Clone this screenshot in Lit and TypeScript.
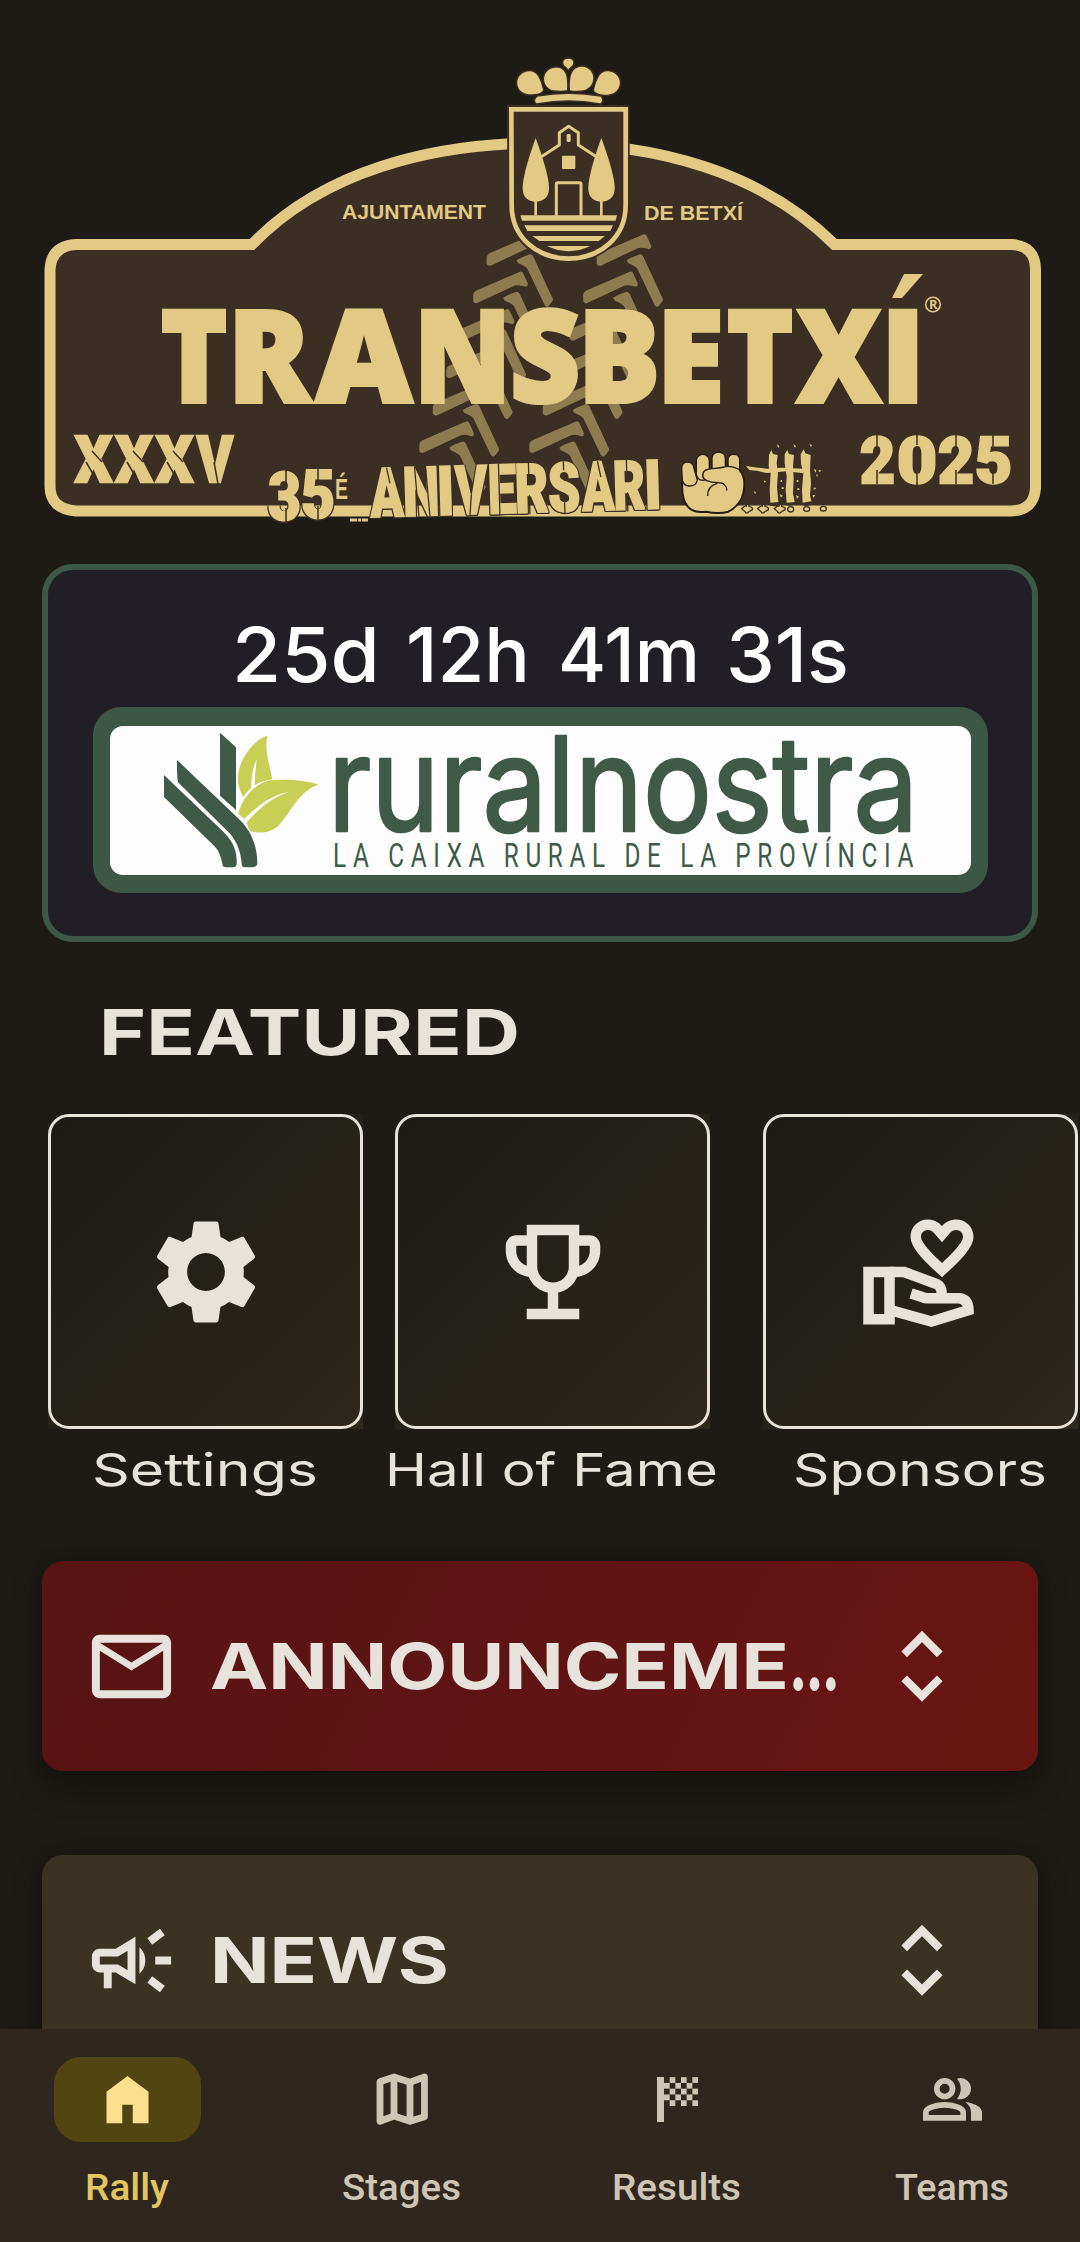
import { LitElement, html, svg, css } from "lit";
import { customElement, property } from "lit/decorators.js";

const GOLD = "#e2ca84";
const BROWN = "#3d2e23";

type Glyph = [string, number, number];

/** SVG text run stretched between two x positions, sitting on a baseline. */
const run = (t: string, x0: number, x1: number, y: number, size: number, cls: string) =>
  svg`<text class=${cls} x=${x0} y=${y} font-size=${size} textLength=${x1 - x0} lengthAdjust="spacingAndGlyphs">${t}</text>`;

@customElement("fit-text")
class FitText extends LitElement {
  @property() text = "";
  @property() tail = "";
  @property({ type: Number }) width = 100;
  @property({ type: Number }) cap = 30;
  @property({ type: Number }) size = 40;
  static styles = css`
    :host { display: block; flex: none; }
    svg { display: block; overflow: visible; }
    text { fill: currentColor; font-family: inherit; font-weight: inherit; }
    .tail { stroke: currentColor; stroke-width: 2; }
  `;
  render() {
    return html`<svg width=${this.width} height=${this.cap}>
      ${run(this.text, 0, this.width, this.cap, this.size, "t")}
      ${this.tail ? run(this.tail, this.width + 1, this.width + 50, this.cap, this.size * 1.1, "tail") : ""}
    </svg>`;
  }
}

@customElement("rally-plate")
class RallyPlate extends LitElement {
  static styles = css`
    :host { display: block; }
    svg { display: block; }
    .title { font-family: "Open Sans", sans-serif; font-weight: 800; fill: #e2ca84; stroke: #e2ca84; stroke-width: 4; }
    .small { font-family: "Liberation Sans", sans-serif; font-weight: 700; fill: #e2ca84; }
    .stencil { font-family: "Roboto", sans-serif; font-weight: 900; fill: #e2ca84; stroke: #e2ca84; stroke-width: 2.5; }
    .stamp { font-family: "Roboto", sans-serif; font-weight: 900; fill: #e2ca84; stroke: #e2ca84; stroke-width: 2; }
    .stamped { filter: drop-shadow(1px 0 0 #3d2e23) drop-shadow(-1px 0 0 #3d2e23) drop-shadow(0 1px 0 #3d2e23); }
    .reg { font-family: "Open Sans", sans-serif; font-weight: 700; fill: #e2ca84; }
  `;
  private letters: Glyph[] = [
    ["T", 161, 227], ["R", 228, 310], ["A", 316, 412], ["N", 414, 511], ["S", 510, 580],
    ["B", 578, 660], ["E", 657, 724], ["T", 727, 793], ["X", 797, 881], ["I", 881, 925],
  ];
  private edition: Glyph[] = [["X", 75, 112], ["X", 115.5, 152.500], ["X", 156, 193], ["V", 197, 233]];
  private year: Glyph[] = [["2", 860, 895], ["0", 897, 937], ["2", 938, 974], ["5", 975, 1012]];
  private anniversary: Glyph[] = [
    ["A", 371, 404], ["N", 403.5, 440], ["I", 437.5, 455], ["V", 456, 488], ["E", 488.5, 517],
    ["R", 515.5, 549], ["S", 549, 581], ["A", 583, 615], ["R", 614, 646], ["I", 645, 662.500],
  ];
  render() {
    const rows = [0, 1, 2, 3, 4, 5];
    return html`<svg width="1080" height="564" viewBox="0 0 1080 564">
      <path d="M98 244.5H252C322 172 430 143 543 143S762 172 834.5 244.5H1012Q1035.500 246 1035.500 270V488Q1034 511 1010 511H76Q50 509 50 486V270Q51 246 76 244.500Z"
        fill=${BROWN} stroke=${GOLD} stroke-width="11"/>
      <g transform="translate(30 40) scale(.33333)" fill="#8f7b50">
        ${[0, 330].map((dx) => rows.map((i) => svg`<g transform="translate(${dx - 40.4 * i} ${112.3 * i})">
          <path d="M1370 652Q1371 645 1378 640L1508 584Q1514 580 1519 586L1534 618Q1534 627 1528 628Q1510 621 1495 624L1382 677Q1374 679 1370 672Z"/>
          <path d="M1460 662Q1463 656 1500 643Q1506 643 1509 648L1569 778Q1570 784 1554 800Q1548 802 1544 795L1492 686Q1486 678 1465 670Z"/>
        </g>`))}
      </g>
      ${this.letters.map(([c, a, b]) => run(c, a, b, 401.5, 127, "title"))}
      <path d="M904 274H923L902 298H892Z" fill=${GOLD}/>
      <circle cx="933" cy="304.500" r="7.300" fill="none" stroke=${GOLD} stroke-width="1.600"/>
      ${run("R", 929, 937.5, 308.7, 11.5, "reg")}
      ${run("AJUNTAMENT", 342, 486, 218.5, 19.5, "small")}
      ${run("DE BETXÍ", 644, 743, 219.5, 20, "small")}

      <g class="crest" transform="translate(480 40) scale(.33333)">
        <path d="M81 195H449V495C449 600 370 665 266 668C160 665 82 600 82 495Z" fill=${BROWN}/>
        <path d="M94 208H437V495C437 592 362 655 266 656C170 655 95 592 95 495Z" fill=${BROWN} stroke=${GOLD} stroke-width="14"/>
        <g fill=${GOLD} stroke=${BROWN} stroke-width="9" paint-order="stroke">
          <path d="M147 94C172 94 180 115 189 150C186 162 160 163 147 163C100 160 100 97 147 94Z"/>
          <path d="M384 94C359 94 351 115 342 150C345 162 371 165 384 164C431 160 431 97 384 94Z"/>
          <path d="M228 83C256 82 264 105 261 150C250 153 235 152 220 151C182 142 182 85 228 83Z"/>
          <path d="M305 80C275 82 268 105 270 150C281 154 298 152 309 151C352 142 350 82 305 80Z"/>
          <path d="M265 56C283 56 283 72 274 79L265 88L256 79C247 72 247 56 265 56Z"/>
          <path d="M172 170Q266 154 362 170Q371 181 361 190Q266 172 170 190Q160 181 172 170Z"/>
        </g>
        <g fill=${GOLD}>
          <path d="M167 294C180 330 207 405 207 445C207 472 190 485 167 485S128 472 128 445C128 405 154 330 167 294Z"/>
          <path d="M364 294C377 330 404 405 404 445C404 472 387 485 364 485S325 472 325 445C325 405 351 330 364 294Z"/>
          <path d="M163 480H171V528H163ZM360 480H368V528H360Z"/>
          <rect x="246" y="347" width="40" height="40" rx="3"/>
          <rect x="260" y="282" width="12" height="24" rx="4"/>
          <path d="M121 526H411L407 542H126ZM133 556H399L391 573H142ZM157 588H375L356 603H178ZM201 618H331Q266 649 201 618Z"/>
        </g>
        <g fill="none" stroke=${GOLD} stroke-width="9" stroke-linejoin="round">
          <path d="M184 350L238 315V278L266 259L295 278V315L349 350"/>
          <path d="M229 528V432Q229 428 233 428H299Q303 428 303 432V528"/>
        </g>
      </g>

      ${this.edition.map(([c, a, b]) => run(c, a, b, 481.5, 64, "stencil"))}
      ${this.year.map(([c, a, b]) => run(c, a, b, 482.5, 65, "stencil"))}
      <g stroke=${BROWN} stroke-width="1.500" fill="none">
        <path d="M92 451L102 462M133 451L143 462M173 451L183 462M86 462L93 474M127 462L134 474M167 462L174 474M214 462L218 484M877 433V449M877 470V484M917 433V445M917 474V486M956 433V449M956 470V484M993 433V449M993 470V484"/>
      </g>

      <g class="stamped">
        ${run("3", 268, 301, 520, 66, "stamp")}${run("5", 301, 335, 518, 66, "stamp")}
        <g transform="rotate(-1.700 371 519)">${this.anniversary.map(([c, a, b]) => run(c, a, b, 517, 68, "stamp"))}</g>
      </g>
      ${run("É", 335, 348, 499, 30, "small")}
      <g transform="rotate(-1.700 371 519)" stroke=${BROWN} stroke-width="1.300" fill="none">
        <path d="M388 468L391 484M416 468L419 518M427 468L430 518M472 498L470 519M500 467V519M530 467V480M530 500V519M565 467V476M565 508V520M599 468L602 484M628 467V480M628 500V519"/>
      </g>
      <path d="M286 470V484M286 508V524M318 468V482M318 506V522" stroke=${BROWN} stroke-width="1.500"/>
      <path d="M350 520H368" stroke=${GOLD} stroke-width="3" stroke-dasharray="7 1 3 1"/>

      <g transform="translate(600 400) scale(.33333)">
        <g fill=${GOLD} stroke="#241a12" stroke-width="4" stroke-linejoin="round">
          <path stroke-width="6" d="M247 245C245 275 247 300 262 318C275 336 295 338 318 335C340 340 360 342 385 335C415 320 432 295 433 255C434 230 424 215 415 207L300 205Z"/>
          <rect x="384" y="163" width="35" height="62" rx="16"/>
          <rect x="336" y="156" width="40" height="70" rx="19"/>
          <rect x="289" y="163" width="39" height="78" rx="19"/>
          <path d="M245 205C245 180 279 180 282 205L292 240C288 263 252 265 247 240Z"/>
          <path d="M318 208C340 204 360 206 375 198C395 198 412 206 418 214C430 232 432 262 422 285C400 315 365 300 345 255C330 247 312 245 308 228Q308 212 318 208Z" stroke="none"/>
          <path fill="none" d="M418 208C400 200 385 196 373 201C350 207 330 203 316 211C304 220 306 236 320 242C345 252 355 245 368 250C380 260 382 268 379 272M352 250C335 255 322 268 323 288"/>
        </g>
        <g fill=${GOLD}>
          <path d="M507 165L514 150L519 162L533 165L530 190L534 220L531 260L535 306L511 308L509 270L512 220L506 200Z"/>
          <path d="M554 163L562 150L567 162L582 165L579 200L581 235L579 280L584 306L560 308L557 270L560 230L554 190Z"/>
          <path d="M602 163L611 148L616 160L632 165L630 210L633 250L630 285L634 304L608 308L606 270L610 220L603 190Z"/>
          <path d="M438 198L475 203L500 206L545 203L610 206V220L560 214L500 219L470 212L448 210Z"/>
          <path d="M530 133l8 5l-3 5zM580 133l8 5l-3 5zM628 131l8 5l-3 5zM641 208l8 2l-2 8zM655 211l10 0l-6 6zM648 224l6 0l-3 6zM461 274l6 2l-1 7zM492 242h5v5h-5zM542 240h4v6h-4zM545 262h6v5h-6zM540 282l8 5l-6 6zM590 240h5v6h-5zM592 265h6v5h-6zM588 285l9 5l-6 6zM641 263h6v5h-6zM638 285l8 0l-6 8z"/>
        </g>
        <g fill=${GOLD} stroke=${BROWN} stroke-width="4">
          <path d="M425 326Q435 316 439 318L443 307L447 319Q460 322 457 329L447 335Q440 344 434 334ZM473 326Q483 316 487 318L491 307L495 319Q508 322 505 329L495 335Q488 344 482 334ZM523 326Q533 316 537 318L541 307L545 319Q558 322 555 329L545 335Q538 344 532 334Z"/>
          <ellipse cx="572" cy="328" rx="9" ry="8"/><ellipse cx="620" cy="327" rx="9" ry="7"/><ellipse cx="670" cy="326" rx="9" ry="7"/>
          <path d="M510 315L535 318M562 315L580 314M611 317L630 314"/>
        </g>
      </g>
    </svg>`;
  }
}

@customElement("sponsor-countdown")
class SponsorCountdown extends LitElement {
  static styles = css`
    :host { display: block; }
    .card { box-sizing: border-box; height: 378px; margin: 0 42px; border: 6px solid #3c5745; border-radius: 31px; background: #221e26; display: flex; flex-direction: column; align-items: center; padding-top: 53px; }
    svg { display: block; overflow: visible; }
    .clock { font-family: "Inter", sans-serif; font-weight: 500; fill: #fff; }
    .banner { box-sizing: border-box; margin-top: 22px; width: 895px; height: 186px; border-radius: 28px; background: #3c5745; padding: 19px 17px 18px; }
    .panel { background: #fdfdfd; border-radius: 13px; height: 149px; }
    .brand { font-family: "Inter", sans-serif; font-weight: 400; fill: #3f5a48; stroke: #3f5a48; stroke-width: 2.5; stroke-linejoin: round; }
    .tag { font-family: "Roboto", sans-serif; font-weight: 400; fill: #3f5a48; letter-spacing: 9px; }
  `;
  render() {
    return html`<div class="card">
      <svg width="612" height="62" viewBox="234 623 612 62">
        ${run("25d", 232, 380, 682, 76, "clock")}
        ${run("12h", 406, 530, 682, 76, "clock")}
        ${run("41m", 558, 700, 682, 76, "clock")}
        ${run("31s", 726, 849, 682, 76, "clock")}
      </svg>
      <div class="banner"><div class="panel">
        <svg width="861" height="149" viewBox="110 726 861 149">
          <g transform="translate(140 700) scale(.33333)">
            <g fill="#3f5a48">
              <path d="M240 98L288 142V330L240 287Z"/>
              <path d="M111 180L300 360C335 395 352 440 352 492Q350 502 335 502H315Q306 502 305 492C303 450 285 415 265 396L114 247Q110 225 111 180Z"/>
              <path d="M72 225L250 395C280 425 292 455 290 492Q289 502 278 502H257Q248 502 247 492C244 470 235 450 225 440L72 291Z"/>
            </g>
            <g fill="#c7d054">
              <path d="M383 107C372 145 388 195 397 238C380 240 362 246 345 255C344 225 348 200 350 178C337 205 334 235 333 265Q320 276 310 291C285 250 292 210 310 175C330 140 355 115 383 107Z"/>
              <path d="M535 254C480 270 450 340 418 374C395 398 360 402 332 394Q323 385 321 367C355 325 400 290 449 275C395 282 350 320 313 357L295 341C305 295 345 250 390 241C440 236 500 240 535 254Z"/>
            </g>
          </g>
          ${run("ruralnostra", 328, 918, 831, 131, "brand")}
          ${run("LA CAIXA RURAL DE LA PROVÍNCIA", 333, 920, 867, 33, "tag")}
        </svg>
      </div></div>
    </div>`;
  }
}

const unfold = html`<svg class="unfold" width="42" height="72" viewBox="0 0 42 72" fill="none" stroke="#e7e2da" stroke-width="8">
  <path d="M3.200 24.300L21 6.500L38.800 24.300M3.200 48.300L21 66.100L38.800 48.300"/></svg>`;

const checks: [number, number][] = [];
for (let r = 0; r < 5; r++) for (let c = 0; c < 6; c++) if ((r + c) % 2 === 1) checks.push([912 + c * 17, 51.5 + r * 17.3]);

@customElement("app-root")
class AppRoot extends LitElement {
  static styles = css`
    :host { display: flex; flex-direction: column; width: 1080px; height: 2242px; overflow: hidden; background: #1e1b16; color: #e7e2da; font-family: "Inter", sans-serif; }
    svg { display: block; flex: none; }
    main { height: 2029px; flex: none; overflow: hidden; }
    .heading { margin: 67px 0 0 99px; font-weight: 700; }
    .tiles { display: flex; margin-top: 59px; padding-left: 48px; width: 1400px; }
    .tile { width: 315px; display: flex; flex-direction: column; align-items: center; font-weight: 400; }
    .tile + .tile { margin-left: 32px; }
    .tile + .tile + .tile { margin-left: 53px; }
    .face { width: 315px; height: 315px; background: linear-gradient(135deg, #1e1b17 0%, #1f1d18 20%, #24211a 45%, #27231a 60%, #2e281d 100%); }
    .ring { box-sizing: border-box; width: 315px; height: 315px; border: 3px solid #e7e2da; border-radius: 21px; display: grid; place-items: center; }
    .tile fit-text { margin-top: 24px; transform: translateX(-1px); }
    .panel { box-sizing: border-box; height: 210px; margin: 0 42px; border-radius: 21px; padding: 0 95px 0 42px; display: flex; align-items: center; font-weight: 700; box-shadow: 0 16px 32px rgba(0, 0, 0, .28), 0 0 14px rgba(0, 0, 0, .16); }
    .alert { margin-top: 75px; background: linear-gradient(118deg, #571412, #5f1414 50%, #6a1512); }
    .news { margin-top: 84px; background: #3b3322; }
    .panel fit-text { margin-left: 31px; }
    .unfold { margin-left: auto; }
    nav { flex: 1; background: #2f271e; display: flex; justify-content: center; gap: 21px; padding-top: 28px; font-family: "Roboto", sans-serif; font-weight: 500; color: #cec5b4; }
    .item { width: 254px; display: flex; flex-direction: column; align-items: center; }
    .pill { width: 147px; height: 85px; border-radius: 27px; display: grid; place-items: center; }
    .item fit-text { margin-top: 32px; transform: translateX(-1px); }
    .on { color: #e4c661; }
    .on .pill { background: #524512; color: #fbe08f; }
  `;

  private tile(icon: unknown, label: string, width: number) {
    return html`<div class="tile">
      <div class="face"><div class="ring"><svg width="126" height="126" viewBox="0 0 24 24" fill="#e7e2da">${icon}</svg></div></div>
      <fit-text .text=${label} .width=${width} .cap=${33} .size=${45.5}></fit-text>
    </div>`;
  }

  private tab(icon: unknown, label: string, width: number, on = false) {
    return html`<div class="item ${on ? "on" : ""}">
      <div class="pill">${icon}</div>
      <fit-text .text=${label} .width=${width} .cap=${26} .size=${36.7}></fit-text>
    </div>`;
  }

  render() {
    const gear = svg`<path d="M19.140 12.940c.04-.3.06-.61.06-.94 0-.32-.02-.64-.07-.94l2.030-1.580c.18-.14.23-.41.12-.61l-1.920-3.320c-.12-.22-.37-.29-.59-.22l-2.390.96c-.5-.38-1.030-.7-1.620-.94l-.36-2.540c-.04-.24-.24-.41-.48-.41h-3.840c-.24 0-.43.17-.47.41l-.36 2.540c-.59.24-1.130.57-1.620.94l-2.390-.96c-.22-.08-.47 0-.59.22L2.740 8.870c-.12.21-.08.47.12.61l2.030 1.580c-.05.3-.09.63-.09.94s.02.64.07.94l-2.030 1.580c-.18.14-.23.41-.12.61l1.920 3.320c.12.22.37.29.59.22l2.390-.96c.5.38 1.030.7 1.620.94l.36 2.540c.05.24.24.41.48.41h3.840c.24 0 .44-.17.47-.41l.36-2.540c.59-.24 1.130-.56 1.620-.94l2.390.96c.22.08.47 0 .59-.22l1.920-3.320c.12-.22.07-.47-.12-.61l-2.010-1.580zM12 15.600c-1.980 0-3.600-1.620-3.600-3.600s1.620-3.600 3.600-3.600 3.600 1.620 3.600 3.600-1.620 3.600-3.600 3.600z"/>`;
    const cup = svg`<path d="M19 5h-2V3H7v2H5c-1.100 0-2 .9-2 2v1c0 2.550 1.920 4.630 4.390 4.940.63 1.500 1.980 2.630 3.610 2.960V19H7v2h10v-2h-4v-3.100c1.630-.33 2.980-1.460 3.610-2.960C19.080 12.630 21 10.550 21 8V7c0-1.100-.9-2-2-2zM5 8V7h2v3.820C5.840 10.400 5 9.300 5 8zm7 6c-1.650 0-3-1.350-3-3V5h6v6c0 1.650-1.350 3-3 3zm7-6c0 1.300-.84 2.400-2 2.820V7h2v1z"/>`;
    const hand = svg`<path d="M16 13c3.090-2.810 6-5.440 6-7.700C22 3.450 20.550 2 18.700 2c-1.040 0-2.050.49-2.700 1.250C15.340 2.490 14.340 2 13.300 2 11.450 2 10 3.450 10 5.300c0 2.260 2.910 4.890 6 7.700zm-2.700-9c.44 0 .89.21 1.180.55L16 6.340l1.520-1.790c.29-.34.74-.55 1.180-.55.74 0 1.300.56 1.300 1.300 0 1.120-2.040 3.170-4 4.990-1.960-1.820-4-3.880-4-4.990 0-.74.56-1.300 1.300-1.300z"/>
      <g fill="none" stroke="#e7e2da" stroke-width="2"><path d="M2 12H6V21H2Z"/><path d="M6 12H8.800L15.100 14.350Q15.950 14.800 15.950 16.200"/><path d="M10.100 16.100L12.200 16.750Q12.700 17 13.300 17H19.300Q21 17.200 21.050 19.250L14 21.450L6.500 19.350"/></g>`;
    return html`
      <main>
        <rally-plate></rally-plate>
        <sponsor-countdown></sponsor-countdown>
        <fit-text class="heading" .text=${"FEATURED"} .width=${421} .cap=${46} .size=${63.5}></fit-text>
        <div class="tiles">
          ${this.tile(gear, "Settings", 226)}
          ${this.tile(cup, "Hall of Fame", 333)}
          ${this.tile(hand, "Sponsors", 254)}
        </div>
        <div class="panel alert">
          <svg width="95" height="95" viewBox="0 0 24 24" fill="#e7e2da"><path d="M22 6c0-1.100-.9-2-2-2H4c-1.100 0-2 .9-2 2v12c0 1.100.9 2 2 2h16c1.100 0 2-.9 2-2V6zm-2 0l-8 5-8-5h16zm0 12H4V8l8 5 8-5v10z"/></svg>
          <fit-text .text=${"ANNOUNCEME"} .tail=${"…"} .width=${579} .cap=${46} .size=${63.5}></fit-text>
          ${unfold}
        </div>
        <div class="panel news">
          <svg width="95" height="95" viewBox="0 0 24 24" fill="#e7e2da"><path d="M18 11v2h4v-2h-4zM16 17.610c.96.71 2.210 1.650 3.200 2.390.4-.53.8-1.070 1.200-1.600-.99-.74-2.240-1.680-3.200-2.400-.4.54-.8 1.080-1.200 1.610zM20.400 5.600c-.4-.53-.8-1.070-1.200-1.600-.99.74-2.240 1.680-3.200 2.400.4.53.8 1.070 1.200 1.600.96-.72 2.210-1.650 3.200-2.400zM4 9c-1.100 0-2 .9-2 2v2c0 1.100.9 2 2 2h1v4h2v-4h1l5 3V6L8 9H4zm5.030 1.710L11 9.530v4.940l-1.970-1.180-.48-.29H4v-2h4.550l.48-.29zM15.500 12c0-1.330-.58-2.530-1.500-3.350v6.690c.92-.81 1.500-2.010 1.500-3.340z"/></svg>
          <fit-text .text=${"NEWS"} .width=${239} .cap=${46} .size=${63.5}></fit-text>
          ${unfold}
        </div>
      </main>
      <nav>
        ${this.tab(html`<svg width="63" height="63" viewBox="0 0 24 24" fill="currentColor"><path d="M4 21V9l8-6 8 6v12h-6v-7h-4v7z"/></svg>`, "Rally", 84, true)}
        ${this.tab(html`<svg width="52.300" height="52.300" viewBox="49 40 157 157" fill="none" stroke="currentColor" stroke-width="20.500" stroke-linejoin="round"><path d="M61 66L103 52L151 68L194.500 52V171L151 185L103 169L61 185Z"/><path d="M103 56V166M151 70V180"/></svg>`, "Stages", 119)}
        ${this.tab(html`<svg width="41" height="45" viewBox="891 51 123 135" fill="currentColor"><path d="M891 51H912V186H891Z"/>${checks.map(([x, y]) => svg`<rect x=${x} y=${y} width="17" height="17.300"/>`)}</svg>`, "Results", 129)}
        ${this.tab(html`<svg width="59" height="43" viewBox="69 55 177 129" fill="currentColor"><g fill="none" stroke="currentColor" stroke-width="17"><circle cx="134" cy="87" r="23.500"/><path d="M77.500 174.500V158C77.500 145 110 135.500 134 135.500S189.500 145 189.500 158V174.500Z"/></g><path d="M171 57C190 50 213 65 213 87S190 124 171 117C186 99 186 75 171 57ZM196 127C225 131 246 142 246 158V183H213V158Q213 140 196 127Z"/></svg>`, "Teams", 114)}
      </nav>`;
  }
}
